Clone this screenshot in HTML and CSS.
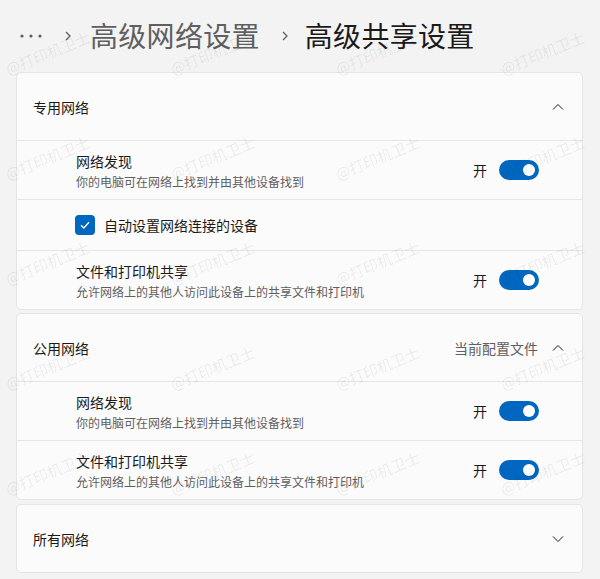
FILE: index.html
```html
<!DOCTYPE html>
<html lang="zh-CN">
	<head>
		<meta charset="UTF-8" />
		<meta name="viewport" content="width=device-width, initial-scale=1.0" />
		<title>高级共享设置</title>
		<link rel="stylesheet" href="styles.css">
	</head>
	<body>
		<div class="page">
			<div class="breadcrumb">
				<svg class="more" width="22" height="6" viewBox="0 0 22 6">
					<circle cx="2" cy="3" r="1.6" fill="#5f5f5f" />
					<circle cx="11" cy="3" r="1.6" fill="#5f5f5f" />
					<circle cx="20" cy="3" r="1.6" fill="#5f5f5f" />
				</svg>
				<svg class="sep" width="10" height="12" viewBox="0 0 10 12">
					<path d="M3 2 L7 6 L3 10" fill="none" stroke="#5f5f5f" stroke-width="1.3" />
				</svg>
				<span class="crumb">高级网络设置</span>
				<svg class="sep" width="10" height="12" viewBox="0 0 10 12">
					<path d="M3 2 L7 6 L3 10" fill="none" stroke="#5f5f5f" stroke-width="1.3" />
				</svg>
				<span class="crumb current">高级共享设置</span>
			</div>

			<div class="card first">
				<div class="card-head">
					<span class="head-title">专用网络</span>
					<svg class="chevron" width="12" height="12" viewBox="0 0 12 12">
						<path d="M1 8.5 L6 3.5 L11 8.5" fill="none" stroke="#1a1a1a" stroke-width="1" />
					</svg>
				</div>
				<div class="row">
					<div class="text">
						<div class="title">网络发现</div>
						<div class="desc">你的电脑可在网络上找到并由其他设备找到</div>
					</div>
					<span class="state">开</span>
					<span class="toggle"><span class="knob"></span></span>
				</div>
				<div class="row check-row">
					<span class="checkbox">
						<svg width="12" height="12" viewBox="0 0 12 12">
							<path d="M2 6.3 L4.8 9 L10 3.2" fill="none" stroke="#fff" stroke-width="1.3" />
						</svg>
					</span>
					<span class="check-label">自动设置网络连接的设备</span>
				</div>
				<div class="row">
					<div class="text">
						<div class="title">文件和打印机共享</div>
						<div class="desc">允许网络上的其他人访问此设备上的共享文件和打印机</div>
					</div>
					<span class="state">开</span>
					<span class="toggle"><span class="knob"></span></span>
				</div>
			</div>

			<div class="card">
				<div class="card-head">
					<span class="head-title">公用网络</span>
					<span class="head-note">当前配置文件</span>
					<svg class="chevron" width="12" height="12" viewBox="0 0 12 12">
						<path d="M1 8.5 L6 3.5 L11 8.5" fill="none" stroke="#1a1a1a" stroke-width="1" />
					</svg>
				</div>
				<div class="row">
					<div class="text">
						<div class="title">网络发现</div>
						<div class="desc">你的电脑可在网络上找到并由其他设备找到</div>
					</div>
					<span class="state">开</span>
					<span class="toggle"><span class="knob"></span></span>
				</div>
				<div class="row">
					<div class="text">
						<div class="title">文件和打印机共享</div>
						<div class="desc">允许网络上的其他人访问此设备上的共享文件和打印机</div>
					</div>
					<span class="state">开</span>
					<span class="toggle"><span class="knob"></span></span>
				</div>
			</div>

			<div class="card">
				<div class="card-head">
					<span class="head-title">所有网络</span>
					<svg class="chevron" width="12" height="12" viewBox="0 0 12 12">
						<path d="M1 3.5 L6 8.5 L11 3.5" fill="none" stroke="#1a1a1a" stroke-width="1" />
					</svg>
				</div>
			</div>
		</div>

		<div class="watermarks">
			<span>@打印机卫士</span><span>@打印机卫士</span><span>@打印机卫士</span><span>@打印机卫士</span>
			<span>@打印机卫士</span><span>@打印机卫士</span><span>@打印机卫士</span><span>@打印机卫士</span>
			<span>@打印机卫士</span><span>@打印机卫士</span><span>@打印机卫士</span><span>@打印机卫士</span>
			<span>@打印机卫士</span><span>@打印机卫士</span><span>@打印机卫士</span><span>@打印机卫士</span>
			<span>@打印机卫士</span><span>@打印机卫士</span><span>@打印机卫士</span><span>@打印机卫士</span>
		</div>
	</body>
</html>
```

FILE: styles.css
```css
body {
	margin: 0;
	background: #f3f3f3;
	font-family: 'Noto Sans CJK SC', 'Noto Sans', sans-serif;
	color: #1a1a1a;
	position: relative;
	overflow: hidden;
	height: 579px;
}
.page {
	padding: 0 17px 0 16px;
}
.breadcrumb {
	height: 72px;
	display: flex;
	align-items: center;
	padding-left: 4px;
}
.breadcrumb .more {
	margin-right: 21px;
}
.crumb {
	font-size: 28px;
	line-height: 36px;
	letter-spacing: 0.3px;
	color: #5f5f5f;
	margin: 0 20px 0 17px;
	position: relative;
	top: -1px;
}
.crumb.current {
	color: #1a1a1a;
	margin-left: 15px;
}
.card {
	background: #fbfbfb;
	border: 1px solid #e5e5e5;
	border-radius: 5px;
	margin-bottom: 4px;
}
.card.first {
	margin-bottom: 3px;
}
.card-head {
	height: 67px;
	display: flex;
	align-items: center;
	padding: 0 18px 0 16px;
}
.head-title {
	font-size: 14px;
	line-height: 20px;
	flex: 1;
}
.head-note {
	font-size: 14px;
	line-height: 20px;
	color: #5f5f5f;
	margin-right: 14px;
}
.chevron {
	display: block;
}
.row {
	height: 58px;
	border-top: 1px solid #e5e5e5;
	display: flex;
	align-items: center;
	padding: 0 43px 0 59px;
}
.check-row {
	height: 50px;
	padding-left: 58px;
}
.text {
	flex: 1;
}
.title {
	font-size: 14px;
	line-height: 20px;
}
.desc {
	font-size: 12px;
	line-height: 16px;
	margin-top: 3px;
	color: #5f5f5f;
}
.state {
	font-size: 14px;
	line-height: 20px;
	margin-right: 12px;
}
.toggle {
	width: 40px;
	height: 20px;
	border-radius: 10px;
	background: #0067c0;
	display: flex;
	align-items: center;
	justify-content: flex-end;
	padding-right: 4px;
	box-sizing: border-box;
}
.knob {
	width: 12px;
	height: 12px;
	border-radius: 50%;
	background: #fff;
}
.checkbox {
	width: 20px;
	height: 20px;
	border-radius: 4px;
	background: #0067c0;
	display: flex;
	align-items: center;
	justify-content: center;
	margin-right: 9px;
}
.check-label {
	font-size: 14px;
	line-height: 20px;
}
.watermarks {
	position: absolute;
	top: 0;
	left: 0;
	display: grid;
	grid-template-columns: repeat(4, 95px);
	column-gap: 70px;
	grid-auto-rows: 105px;
	pointer-events: none;
}
.watermarks span {
	display: flex;
	align-items: center;
	justify-content: center;
	font-size: 15px;
	color: rgba(0, 0, 0, 0.08);
	transform: rotate(-22deg);
	white-space: nowrap;
}
```
